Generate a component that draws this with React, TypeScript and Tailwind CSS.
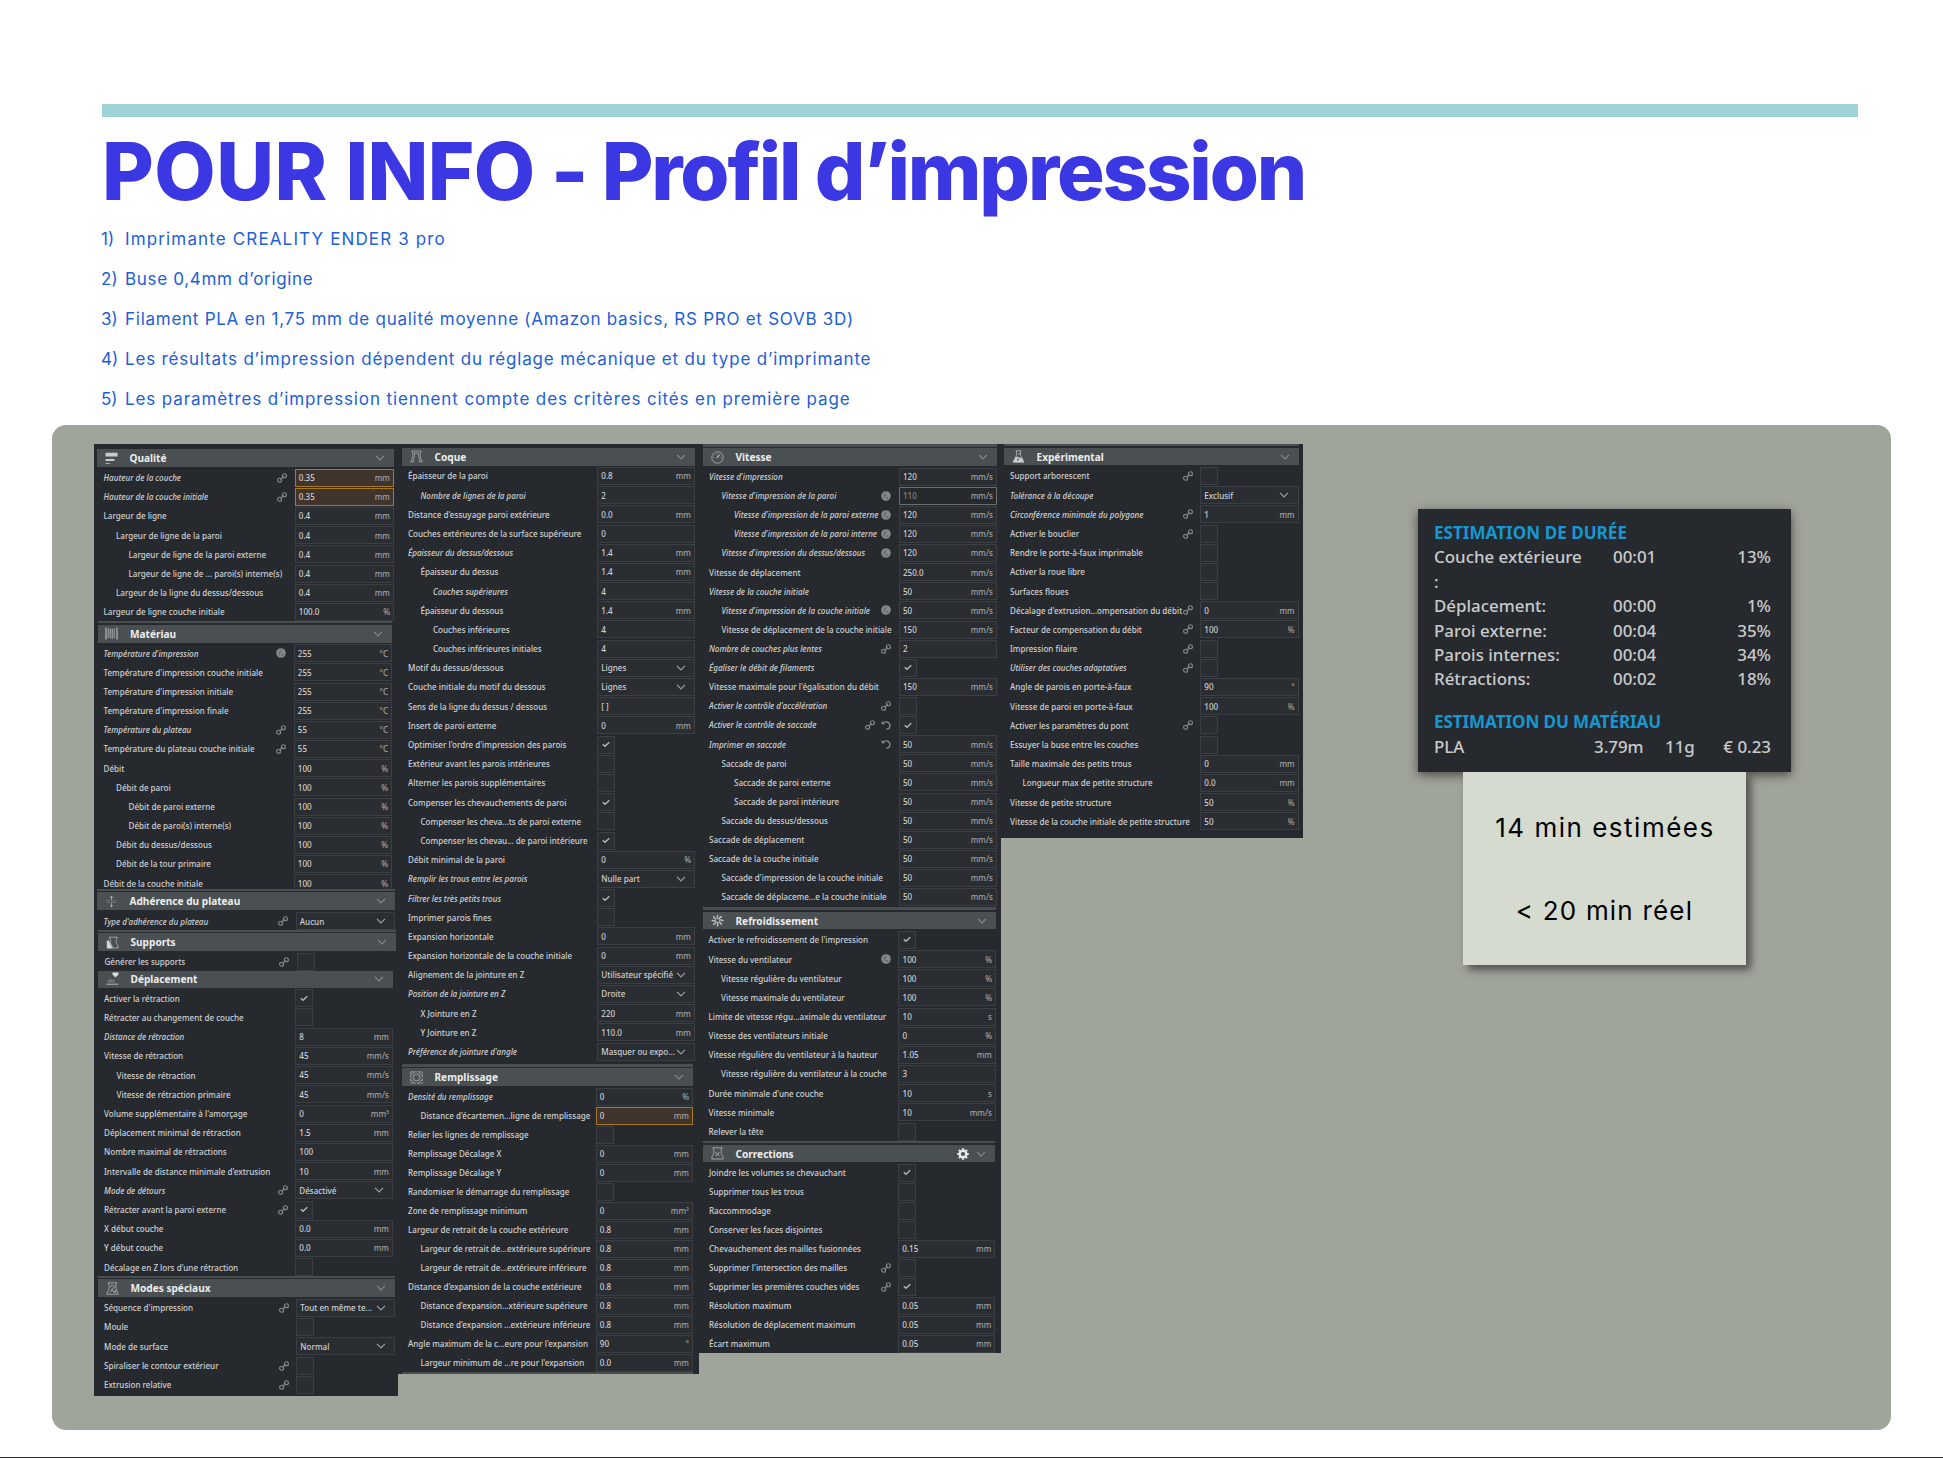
import React from "react";

type Row = {
  label: string;
  kind: "field" | "select" | "check";
  value?: string;
  unit?: string;
  on?: boolean;
  flags: string;
};

/* Flags: i italic, 1/2 indent level, l link, x function, u undo, o overridden, a active */
const f = (label: string, value: string, unit = "", flags = ""): Row => ({ label, kind: "field", value, unit, flags });
const s = (label: string, value: string, flags = ""): Row => ({ label, kind: "select", value, flags });
const c = (label: string, on: boolean, flags = ""): Row => ({ label, kind: "check", on, flags });

type IconName =
  | "quality" | "material" | "adhesion" | "support" | "travel" | "special"
  | "shell" | "infill" | "speed" | "cooling" | "fixes" | "experimental";

type SectionData = {
  title: string;
  icon: IconName;
  box: string;
  strip?: string;
  head: string;
  body: string;
  gear?: boolean;
  tail?: boolean;
  rows: Row[];
};

const qualite: SectionData = {
  title: "Qualité",
  icon: "quality",
  box: "ml-[3px] w-[297px] h-[172px] [--pitch:19.21px] [--field:99.5px]",
  head: "h-[18px]",
  body: "pt-[1px] pl-[6.5px]",
  rows: [
    f("Hauteur de la couche", "0.35", "mm", "ilo"),
    f("Hauteur de la couche initiale", "0.35", "mm", "ilo"),
    f("Largeur de ligne", "0.4", "mm"),
    f("Largeur de ligne de la paroi", "0.4", "mm", "1"),
    f("Largeur de ligne de la paroi externe", "0.4", "mm", "2"),
    f("Largeur de ligne de ... paroi(s) interne(s)", "0.4", "mm", "2"),
    f("Largeur de la ligne du dessus/dessous", "0.4", "mm", "1"),
    f("Largeur de ligne couche initiale", "100.0", "%"),
  ],
};

const materiau: SectionData = {
  title: "Matériau",
  icon: "material",
  box: "ml-[3.5px] w-[294.5px] h-[268px] [--pitch:19.17px] [--field:98.5px]",
  strip: "h-[2px] mb-[2px]",
  head: "h-[17.5px]",
  body: "pt-[1.2px] pl-[6px]",
  rows: [
    f("Température d'impression", "255", "°C", "ix"),
    f("Température d'impression couche initiale", "255", "°C"),
    f("Température d'impression initiale", "255", "°C"),
    f("Température d'impression finale", "255", "°C"),
    f("Température du plateau", "55", "°C", "il"),
    f("Température du plateau couche initiale", "55", "°C", "l"),
    f("Débit", "100", "%"),
    f("Débit de paroi", "100", "%", "1"),
    f("Débit de paroi externe", "100", "%", "2"),
    f("Débit de paroi(s) interne(s)", "100", "%", "2"),
    f("Débit du dessus/dessous", "100", "%", "1"),
    f("Débit de la tour primaire", "100", "%", "1"),
    f("Débit de la couche initiale", "100", "%"),
  ],
};

const adherence: SectionData = {
  title: "Adhérence du plateau",
  icon: "adhesion",
  box: "ml-[3px] w-[298px] h-[41px] [--pitch:19.2px] [--field:99.5px]",
  strip: "h-[1.5px] mb-[1.5px]",
  head: "h-[18px]",
  body: "pt-[1.7px] pl-[6.5px]",
  rows: [s("Type d'adhérence du plateau", "Aucun", "il")],
};

const supports: SectionData = {
  title: "Supports",
  icon: "support",
  box: "ml-[4px] w-[298px] h-[41px] [--pitch:19.2px] [--field:99.5px]",
  strip: "h-[1.5px] mb-[1.5px]",
  head: "h-[18px]",
  body: "pt-[1px] pl-[6.5px]",
  rows: [c("Générer les supports", false, "l")],
};

const deplacement: SectionData = {
  title: "Déplacement",
  icon: "travel",
  box: "ml-[4px] w-[295px] h-[305px] [--pitch:19.21px] [--field:98px]",
  head: "h-[17px] pb-[2px]",
  body: "pt-[0.7px] pl-[6px]",
  rows: [
    c("Activer la rétraction", true),
    c("Rétracter au changement de couche", false),
    f("Distance de rétraction", "8", "mm", "i"),
    f("Vitesse de rétraction", "45", "mm/s"),
    f("Vitesse de rétraction", "45", "mm/s", "1"),
    f("Vitesse de rétraction primaire", "45", "mm/s", "1"),
    f("Volume supplémentaire à l'amorçage", "0", "mm³"),
    f("Déplacement minimal de rétraction", "1.5", "mm"),
    f("Nombre maximal de rétractions", "100"),
    f("Intervalle de distance minimale d'extrusion", "10", "mm"),
    s("Mode de détours", "Désactivé", "il"),
    c("Rétracter avant la paroi externe", true, "l"),
    f("X début couche", "0.0", "mm"),
    f("Y début couche", "0.0", "mm"),
    c("Décalage en Z lors d'une rétraction", false),
  ],
};

const modes: SectionData = {
  title: "Modes spéciaux",
  icon: "special",
  box: "ml-[4px] w-[297px] h-[120px] [--pitch:19.33px] [--field:99px]",
  strip: "h-[1.5px] mb-[1.5px]",
  head: "h-[18px]",
  body: "pt-[1px] pl-[6px]",
  rows: [
    s("Séquence d'impression", "Tout en même te...", "l"),
    c("Moule", false),
    s("Mode de surface", "Normal"),
    c("Spiraliser le contour extérieur", false, "l"),
    c("Extrusion relative", false, "l"),
  ],
};

const coque: SectionData = {
  title: "Coque",
  icon: "shell",
  box: "ml-[4px] w-[293px] h-[616px] [--pitch:19.2px] [--field:98px]",
  head: "h-[17.5px]",
  body: "pt-[0.9px] pl-[6px]",
  rows: [
    f("Épaisseur de la paroi", "0.8", "mm"),
    f("Nombre de lignes de la paroi", "2", "", "i1"),
    f("Distance d'essuyage paroi extérieure", "0.0", "mm"),
    f("Couches extérieures de la surface supérieure", "0"),
    f("Épaisseur du dessus/dessous", "1.4", "mm", "i"),
    f("Épaisseur du dessus", "1.4", "mm", "1"),
    f("Couches supérieures", "4", "", "i2"),
    f("Épaisseur du dessous", "1.4", "mm", "1"),
    f("Couches inférieures", "4", "", "2"),
    f("Couches inférieures initiales", "4", "", "2"),
    s("Motif du dessus/dessous", "Lignes"),
    s("Couche initiale du motif du dessous", "Lignes"),
    f("Sens de la ligne du dessus / dessous", "[ ]"),
    f("Insert de paroi externe", "0", "mm"),
    c("Optimiser l'ordre d'impression des parois", true),
    c("Extérieur avant les parois intérieures", false),
    c("Alterner les parois supplémentaires", false),
    c("Compenser les chevauchements de paroi", true),
    c("Compenser les cheva...ts de paroi externe", false, "1"),
    c("Compenser les chevau... de paroi intérieure", true, "1"),
    f("Débit minimal de la paroi", "0", "%"),
    s("Remplir les trous entre les parois", "Nulle part", "i"),
    c("Filtrer les très petits trous", true, "i"),
    c("Imprimer parois fines", false),
    f("Expansion horizontale", "0", "mm"),
    f("Expansion horizontale de la couche initiale", "0", "mm"),
    s("Alignement de la jointure en Z", "Utilisateur spécifié"),
    s("Position de la jointure en Z", "Droite", "i"),
    f("X Jointure en Z", "220", "mm", "1"),
    f("Y Jointure en Z", "110.0", "mm", "1"),
    s("Préférence de jointure d'angle", "Masquer ou expo...", "i"),
  ],
};

const remplissage: SectionData = {
  title: "Remplissage",
  icon: "infill",
  box: "ml-[4px] w-[291px] h-[310px] [--pitch:19px] [--field:97.5px]",
  strip: "h-[3px] mb-[1px]",
  head: "h-[18px]",
  body: "pt-[1.2px] pl-[6px]",
  tail: true,
  rows: [
    f("Densité du remplissage", "0", "%", "i"),
    f("Distance d'écartemen...ligne de remplissage", "0", "mm", "1o"),
    c("Relier les lignes de remplissage", false),
    f("Remplissage Décalage X", "0", "mm"),
    f("Remplissage Décalage Y", "0", "mm"),
    c("Randomiser le démarrage du remplissage", false),
    f("Zone de remplissage minimum", "0", "mm²"),
    f("Largeur de retrait de la couche extérieure", "0.8", "mm"),
    f("Largeur de retrait de...extérieure supérieure", "0.8", "mm", "1"),
    f("Largeur de retrait de...extérieure inférieure", "0.8", "mm", "1"),
    f("Distance d'expansion de la couche extérieure", "0.8", "mm"),
    f("Distance d'expansion...xtérieure supérieure", "0.8", "mm", "1"),
    f("Distance d'expansion ...extérieure inférieure", "0.8", "mm", "1"),
    f("Angle maximum de la c...eure pour l'expansion", "90", "°"),
    f("Largeur minimum de ...re pour l'expansion", "0.0", "mm", "1"),
  ],
};

const vitesse: SectionData = {
  title: "Vitesse",
  icon: "speed",
  box: "ml-[4px] w-[294px] h-[463px] [--pitch:19.12px] [--field:98.3px]",
  strip: "h-[3px] mb-[1px]",
  head: "h-[18px]",
  body: "pt-[1.1px] pl-[6px]",
  rows: [
    f("Vitesse d'impression", "120", "mm/s", "i"),
    f("Vitesse d'impression de la paroi", "110", "mm/s", "i1xa"),
    f("Vitesse d'impression de la paroi externe", "120", "mm/s", "i2x"),
    f("Vitesse d'impression de la paroi interne", "120", "mm/s", "i2x"),
    f("Vitesse d'impression du dessus/dessous", "120", "mm/s", "i1x"),
    f("Vitesse de déplacement", "250.0", "mm/s"),
    f("Vitesse de la couche initiale", "50", "mm/s", "i"),
    f("Vitesse d'impression de la couche initiale", "50", "mm/s", "i1x"),
    f("Vitesse de déplacement de la couche initiale", "150", "mm/s", "1"),
    f("Nombre de couches plus lentes", "2", "", "il"),
    c("Égaliser le débit de filaments", true, "i"),
    f("Vitesse maximale pour l'égalisation du débit", "150", "mm/s"),
    c("Activer le contrôle d'accélération", false, "il"),
    c("Activer le contrôle de saccade", true, "ilu"),
    f("Imprimer en saccade", "50", "mm/s", "iu"),
    f("Saccade de paroi", "50", "mm/s", "1"),
    f("Saccade de paroi externe", "50", "mm/s", "2"),
    f("Saccade de paroi intérieure", "50", "mm/s", "2"),
    f("Saccade du dessus/dessous", "50", "mm/s", "1"),
    f("Saccade de déplacement", "50", "mm/s"),
    f("Saccade de la couche initiale", "50", "mm/s"),
    f("Saccade d'impression de la couche initiale", "50", "mm/s", "1"),
    f("Saccade de déplaceme...e la couche initiale", "50", "mm/s", "1"),
  ],
};

const refroidissement: SectionData = {
  title: "Refroidissement",
  icon: "cooling",
  box: "ml-[4px] w-[293px] h-[234px] [--pitch:19.17px] [--field:97.7px]",
  strip: "h-[3px] mb-[2px]",
  head: "h-[17px]",
  body: "pt-[1.4px] pl-[5.5px]",
  rows: [
    c("Activer le refroidissement de l'impression", true),
    f("Vitesse du ventilateur", "100", "%", "x"),
    f("Vitesse régulière du ventilateur", "100", "%", "1"),
    f("Vitesse maximale du ventilateur", "100", "%", "1"),
    f("Limite de vitesse régu...aximale du ventilateur", "10", "s"),
    f("Vitesse des ventilateurs initiale", "0", "%"),
    f("Vitesse régulière du ventilateur à la hauteur", "1.05", "mm"),
    f("Vitesse régulière du ventilateur à la couche", "3", "", "1"),
    f("Durée minimale d'une couche", "10", "s"),
    f("Vitesse minimale", "10", "mm/s"),
    c("Relever la tête", false),
  ],
};

const corrections: SectionData = {
  title: "Corrections",
  icon: "fixes",
  box: "ml-[4px] w-[292.3px] h-[212px] [--pitch:19px] [--field:97.3px]",
  strip: "h-[2px] mb-[2px]",
  head: "h-[17px]",
  body: "pt-[1.3px] pl-[6px]",
  gear: true,
  rows: [
    c("Joindre les volumes se chevauchant", true),
    c("Supprimer tous les trous", false),
    c("Raccommodage", false),
    c("Conserver les faces disjointes", false),
    f("Chevauchement des mailles fusionnées", "0.15", "mm"),
    c("Supprimer l'intersection des mailles", false, "l"),
    c("Supprimer les premières couches vides", true, "l"),
    f("Résolution maximum", "0.05", "mm"),
    f("Résolution de déplacement maximum", "0.05", "mm"),
    f("Écart maximum", "0.05", "mm"),
  ],
};

const experimental: SectionData = {
  title: "Expérimental",
  icon: "experimental",
  box: "ml-[3px] w-[294.7px] h-[394px] [--pitch:19.2px] [--field:98.7px]",
  strip: "h-[2px] mb-[2px]",
  head: "h-[17.4px]",
  body: "pt-[1px] pl-[6px]",
  rows: [
    c("Support arborescent", false, "l"),
    s("Tolérance à la découpe", "Exclusif", "i"),
    f("Circonférence minimale du polygone", "1", "mm", "il"),
    c("Activer le bouclier", false, "l"),
    c("Rendre le porte-à-faux imprimable", false),
    c("Activer la roue libre", false),
    c("Surfaces floues", false),
    f("Décalage d'extrusion...ompensation du débit", "0", "mm", "l"),
    f("Facteur de compensation du débit", "100", "%", "l"),
    c("Impression filaire", false, "l"),
    c("Utiliser des couches adaptatives", false, "il"),
    f("Angle de parois en porte-à-faux", "90", "°"),
    f("Vitesse de paroi en porte-à-faux", "100", "%"),
    c("Activer les paramètres du pont", false, "l"),
    c("Essuyer la buse entre les couches", false),
    f("Taille maximale des petits trous", "0", "mm"),
    f("Longueur max de petite structure", "0.0", "mm", "1"),
    f("Vitesse de petite structure", "50", "%"),
    f("Vitesse de la couche initiale de petite structure", "50", "%"),
  ],
};

function Chevron({ className }: { className: string }) {
  return (
    <svg viewBox="0 0 10 6" className={`h-[6px] w-[10px] shrink-0 ${className}`} fill="none" stroke="currentColor" strokeWidth="1.2">
      <path d="M1 0.9 5 4.9 9 0.9" />
    </svg>
  );
}

function LinkIcon() {
  return (
    <svg viewBox="0 0 10 10" className="h-[10px] w-[10px] shrink-0 text-[#85888b]" fill="none" stroke="currentColor" strokeWidth="1.15">
      <circle cx="2.6" cy="7.2" r="2" />
      <circle cx="7.4" cy="2.7" r="2" />
      <path d="M3.4 6.4 6.6 3.5" />
    </svg>
  );
}

function FunctionIcon() {
  return (
    <svg viewBox="0 0 10 10" className="h-[10px] w-[10px] shrink-0" fill="none">
      <circle cx="5" cy="5" r="4.8" fill="#85888a" />
      <path d="M5.4 2.2C4.2 1.9 4 2.8 3.7 4.2L3.1 7.4M2.6 4.3H4.8M5.4 6 7.2 7.9M7.2 6 5.4 7.9" stroke="#55585b" strokeWidth="0.7" />
    </svg>
  );
}

function UndoIcon() {
  return (
    <svg viewBox="0 0 10 10" className="h-[10px] w-[10px] shrink-0 text-[#8b8e90]" fill="none" stroke="currentColor" strokeWidth="1.3">
      <path d="M2 3.4C4.4 0.8 8.9 2 8.9 5.4 8.9 7.6 7.4 9 5.4 9" />
      <path d="M0.6 0.9V4.3H4.1Z" fill="currentColor" stroke="none" />
    </svg>
  );
}

function SectionIcon({ name }: { name: IconName }) {
  const cls = "h-[13px] w-[13px] shrink-0 text-[#b4b7b9]";
  switch (name) {
    case "quality":
      return (
        <svg viewBox="0 0 13 13" className={cls} fill="#c9cbcc">
          <path d="M0.5 0.8H12.5V4.6H0.5ZM0.5 7H9.4V8.9H0.5ZM0.5 11.2H5V12H0.5Z" />
        </svg>
      );
    case "material":
      return (
        <svg viewBox="0 0 13 13" className={cls} fill="none" stroke="currentColor">
          <path d="M1 0.5V12.5M12 0.5V12.5" strokeWidth="1.2" />
          <path d="M3.2 1.5V11M5.2 1.5V11M7.2 1.5V12M9.2 1.5V11" strokeWidth="0.9" />
        </svg>
      );
    case "adhesion":
      return (
        <svg viewBox="0 0 13 13" className={cls} fill="none" stroke="currentColor" strokeWidth="0.8">
          <path d="M1.4 5.7H11.6M1.4 7.4H11.6" strokeOpacity="0.6" strokeDasharray="1.6 0.7" />
          <path d="M6.5 2.6V5M6.5 10.4V8.2" />
          <path d="M4.9 2.8 6.5 0.6 8.1 2.8ZM4.9 10.2 6.5 12.4 8.1 10.2Z" fill="currentColor" stroke="none" />
        </svg>
      );
    case "support":
      return (
        <svg viewBox="0 0 13 13" className={cls} fill="none" stroke="currentColor" strokeWidth="0.8">
          <path d="M0.8 4.6H3.2C3.4 8 5.4 8.6 6.6 12.4H0.8Z" fill="#d2d4d5" stroke="none" />
          <path d="M3.2 1.2H11.4C9.6 4.6 9.6 6.4 12 9.8V12H6.6C6.2 8.6 3.6 7.8 4.4 3.6Z" />
        </svg>
      );
    case "travel":
      return (
        <svg viewBox="0 0 13 13" className={cls} fill="none" stroke="#7d8183" strokeWidth="1">
          <path d="M6.5 0.4H12.4V2.6L9.5 5.4 6.5 2.6Z" fill="#dcdedf" stroke="none" />
          <path d="M2.4 7.4H8.4L9.2 10.6H1.6Z" fill="#6f7376" stroke="none" />
          <path d="M0.4 12.2H12.4" stroke="#b4b7b9" />
        </svg>
      );
    case "special":
      return (
        <svg viewBox="0 0 13 13" className={cls} fill="none" stroke="currentColor" strokeWidth="0.8">
          <path d="M2.2 0.8H10.8C9 4 9.4 6 12.4 12.2H0.8C3.6 6 4 4 2.2 0.8Z" />
          <path d="M4 10.6 8.8 4.2M4.6 5.2 6.2 2.6 8.6 5M5 7.2 9.8 10.8M7 9.8H9.6V7.6" />
        </svg>
      );
    case "shell":
      return (
        <svg viewBox="0 0 13 13" className={cls} fill="none" stroke="currentColor" strokeWidth="0.75">
          <path d="M1.8 1H11.2C9.4 4 9.8 6 12.2 11.8H9.4C9.6 9 8.6 7 8.4 3H4.6C4.4 7 3.4 9 3.6 11.8H0.8C3.2 6 3.6 4 1.8 1Z" />
        </svg>
      );
    case "infill":
      return (
        <svg viewBox="0 0 13 13" className={cls} fill="none" stroke="currentColor" strokeWidth="0.8">
          <path d="M0.8 0.8H12.2V12.2H0.8Z" strokeDasharray="2.6 1" />
          <circle cx="6.5" cy="6.5" r="3.4" />
          <path d="M1 4.4 4.4 1M8.6 1 12 4.4M12 8.6 8.6 12M4.4 12 1 8.6" />
        </svg>
      );
    case "speed":
      return (
        <svg viewBox="0 0 13 13" className={cls} fill="none" stroke="currentColor" strokeWidth="0.8">
          <circle cx="6.5" cy="6.5" r="5.7" />
          <path d="M6 7.2 8.4 3.6" strokeWidth="1.3" />
          <path d="M2.4 6.6H3.4M9.6 6.6H10.6M3.6 3.6 4.3 4.3M6.3 2.3V3.2" />
        </svg>
      );
    case "cooling":
      return (
        <svg viewBox="0 0 13 13" className={cls} fill="none" stroke="#d0d2d3" strokeWidth="1.1">
          <path d="M6.5 5C5.6 3.6 6 2 7 0.8M7.7 5.3C8.1 3.6 9.4 2.7 11 2.6M8.1 6.4C9.6 5.5 11.2 5.9 12.3 7M7.7 7.7C9.4 8.1 10.3 9.4 10.4 11M6.5 8C7.4 9.5 7 11.2 6 12.3M5.3 7.7C4.9 9.4 3.6 10.3 2 10.4M5 6.5C3.5 7.4 1.8 7 0.7 6M5.3 5.3C3.6 4.9 2.7 3.6 2.6 2" />
        </svg>
      );
    case "fixes":
      return (
        <svg viewBox="0 0 13 13" className={cls} fill="none" stroke="currentColor" strokeWidth="0.8">
          <path d="M1.8 0.8H11.2C9.4 4 9.6 6.4 12 9.4M1.8 0.8C3.6 4 3.4 6.4 1 9.4M0.6 12H12.4M1 9.4V12M12 9.4V12" />
          <path d="M4.6 5.2 8.4 9M8.4 5.2 4.6 9" strokeWidth="1" />
        </svg>
      );
    default:
      return (
        <svg viewBox="0 0 13 13" className={cls} fill="none" stroke="currentColor" strokeWidth="0.8">
          <path d="M3.6 0.8H9.4M4.6 0.8V5L1 12.2H12L8.4 5V0.8" />
          <path d="M3.4 7.6 5.6 6.6 8 8 9.6 7.4 12 12.2H1Z" fill="#c9cbcc" stroke="none" />
          <circle cx="6.9" cy="4" r="0.8" fill="currentColor" stroke="none" />
          <circle cx="6" cy="9.4" r="0.9" fill="#4a4f52" stroke="none" />
        </svg>
      );
  }
}

function GearIcon() {
  return (
    <svg viewBox="0 0 12 12" className="mr-[7.5px] h-[12px] w-[12px] shrink-0" fill="none" stroke="#e4e6e7">
      <circle cx="6" cy="6" r="3.3" strokeWidth="2.4" />
      <path d="M6 0.2V2M6 10V11.8M0.2 6H2M10 6H11.8M1.9 1.9 3.2 3.2M8.8 8.8 10.1 10.1M1.9 10.1 3.2 8.8M8.8 3.2 10.1 1.9" strokeWidth="2.1" />
    </svg>
  );
}

function Control({ row }: { row: Row }) {
  if (row.kind === "check") {
    return (
      <div className="w-[var(--field)] shrink-0">
        <div className="flex h-[18px] w-[18px] items-center justify-center border border-[#3b3e42] bg-[#2a2d31]">
          {row.on && (
            <svg viewBox="0 0 8 7" className="h-[7px] w-[8px]" fill="none" stroke="#b4b6b8" strokeWidth="1.4">
              <path d="M0.8 3.2 3 5.3 7.3 1.2" />
            </svg>
          )}
        </div>
      </div>
    );
  }
  const look = row.flags.includes("o")
    ? "border-[#a87a1e] bg-[#41342c]"
    : row.flags.includes("a")
      ? "border-[#6c7073] bg-[#26292d]"
      : "border-[#3b3e42] bg-[#2a2d31]";
  const tone = row.flags.includes("a") ? "text-[#808385]" : "text-[#cfd1d3]";
  return (
    <div className={`flex h-[18px] w-[var(--field)] shrink-0 items-center justify-between border pr-[3px] pl-[3.3px] ${look}`}>
      <span className={`pt-[0.8px] ${tone}`}>{row.value}</span>
      {row.kind === "select" ? (
        <Chevron className="mr-[5.5px] text-[#9da0a2]" />
      ) : (
        <span className="pt-[0.8px] text-[#a0a3a5]">{row.unit}</span>
      )}
    </div>
  );
}

function SettingRow({ row }: { row: Row }) {
  const indent = row.flags.includes("2") ? "pl-[25px]" : row.flags.includes("1") ? "pl-[12.5px]" : "";
  return (
    <div className="flex h-[var(--pitch)] shrink-0 items-center">
      <span className={`min-w-0 flex-1 pt-[0.8px] ${indent} ${row.flags.includes("i") ? "italic" : ""}`}>{row.label}</span>
      <span className="flex shrink-0 gap-[6px] pr-[7.5px]">
        {row.flags.includes("l") && <LinkIcon />}
        {row.flags.includes("x") && <FunctionIcon />}
        {row.flags.includes("u") && <UndoIcon />}
      </span>
      <Control row={row} />
    </div>
  );
}

function Section({ data }: { data: SectionData }) {
  return (
    <section className={`flex flex-col overflow-hidden ${data.box}`}>
      {data.strip && <div className={`shrink-0 bg-[#494e51] ${data.strip}`} />}
      <header className={`flex shrink-0 items-center bg-[#4a4f52] pr-[9px] pl-[7.5px] ${data.head}`}>
        <SectionIcon name={data.icon} />
        <h2 className="ml-[12px] flex-1 text-[10.1px] font-bold text-[#eceeef]">{data.title}</h2>
        {data.gear && <GearIcon />}
        <Chevron className="text-[#85898c]" />
      </header>
      <div className={`flex shrink-0 flex-col ${data.body}`}>
        {data.rows.map((row, i) => (
          <SettingRow key={i} row={row} />
        ))}
      </div>
      {data.tail && <div className="h-[2px] shrink-0 bg-[#494e51]" />}
    </section>
  );
}

const notes = [
  { text: "Imprimante CREALITY ENDER 3 pro", track: "tracking-[1.14px]" },
  { text: "Buse 0,4mm d’origine", track: "tracking-[0.68px]" },
  { text: "Filament PLA en 1,75 mm de qualité moyenne (Amazon basics, RS PRO et SOVB 3D)", track: "tracking-[0.74px]" },
  { text: "Les résultats d’impression dépendent du réglage mécanique et du type d’imprimante", track: "tracking-[0.81px]" },
  { text: "Les paramètres d’impression tiennent compte des critères cités en première page", track: "tracking-[0.88px]" },
];

const durations = [
  ["Couche extérieure :", "00:01", "13%"],
  ["Déplacement:", "00:00", "1%"],
  ["Paroi externe:", "00:04", "35%"],
  ["Parois internes:", "00:04", "34%"],
  ["Rétractions:", "00:02", "18%"],
];

function Estimate() {
  return (
    <div className="h-[263px] w-[373px] bg-[#262a2e] pt-[12px] pr-[20px] pl-[16px] font-['Noto_Sans',sans-serif] text-[16.9px] leading-[24.4px] font-medium text-[#c9cbcd] shadow-[0_3px_10px_rgba(0,0,0,0.55)]">
      <h3 className="text-[17.1px] font-bold text-[#1797d2]">ESTIMATION DE DURÉE</h3>
      {durations.map(([name, time, share]) => (
        <div key={name} className="flex">
          <span className="w-[152px]">{name}</span>
          <span className="ml-[27px] flex-1">{time}</span>
          <span>{share}</span>
        </div>
      ))}
      <h3 className="mt-[18.5px] text-[17.1px] font-bold tracking-[-0.1px] text-[#1797d2]">ESTIMATION DU MATÉRIAU</h3>
      <div className="flex">
        <span className="w-[160px]">PLA</span>
        <span className="w-[71px]">3.79m</span>
        <span className="flex-1">11g</span>
        <span>€ 0.23</span>
      </div>
    </div>
  );
}

export default function App() {
  return (
    <div className="flex h-[1458px] w-[1943px] flex-col overflow-hidden border-b border-[#2b2b2b] bg-white font-['Inter',sans-serif]">
      <div className="mt-[104px] ml-[102px] h-[13px] w-[1756px] shrink-0 bg-[#9fd3d6]" />
      <h1 className="mt-[12px] ml-[102px] h-[84px] shrink-0 text-[79.5px] leading-[84px] font-extrabold whitespace-nowrap text-[#3b37e2]">
        <span className="tracking-[0.5px]">POUR </span>
        <span className="tracking-[-0.7px]">INFO </span>
        <span className="tracking-[-2.15px]">- Profil d’impression</span>
      </h1>
      <ol className="mt-[7px] ml-[101px] flex shrink-0 flex-col text-[17px] text-[#1d60d8]">
        {notes.map((n, i) => (
          <li key={i} className="flex h-[40px] items-center whitespace-nowrap">
            <span className="w-[24px]">{i + 1})</span>
            <span className={n.track}>{n.text}</span>
          </li>
        ))}
      </ol>
      <main className="mt-[5px] ml-[52px] flex h-[1005px] w-[1839px] shrink-0 items-start rounded-[14px] bg-[#a0a59c] pt-[19px] pl-[42px]">
        <div className="flex items-start font-['Noto_Sans',sans-serif] text-[8.07px] leading-[12px] font-medium whitespace-nowrap text-[#cfd1d3]">
          <div className="h-[952px] w-[304px] bg-[#262a2e] pt-[5px]">
            <Section data={qualite} />
            <Section data={materiau} />
            <Section data={adherence} />
            <Section data={supports} />
            <Section data={deplacement} />
            <Section data={modes} />
          </div>
          <div className="h-[930px] w-[301px] bg-[#262a2e] pt-[4px]">
            <Section data={coque} />
            <Section data={remplissage} />
          </div>
          <div className="h-[909px] w-[302px] bg-[#262a2e]">
            <Section data={vitesse} />
            <Section data={refroidissement} />
            <Section data={corrections} />
          </div>
          <div className="h-[394px] w-[302px] bg-[#262a2e]">
            <Section data={experimental} />
          </div>
        </div>
        <div className="mt-[65px] ml-[115px] flex flex-col items-center">
          <Estimate />
          <div className="flex h-[193px] w-[283px] flex-col items-center bg-[#d5dccf] pt-[36px] text-[26px] leading-[40px] text-black shadow-[5px_5px_8px_rgba(0,0,0,0.5)]">
            <p className="pl-px tracking-[1.5px]">14 min estimées</p>
            <p className="mt-[43px] tracking-[1.2px]">&lt; 20 min réel</p>
          </div>
        </div>
      </main>
    </div>
  );
}
